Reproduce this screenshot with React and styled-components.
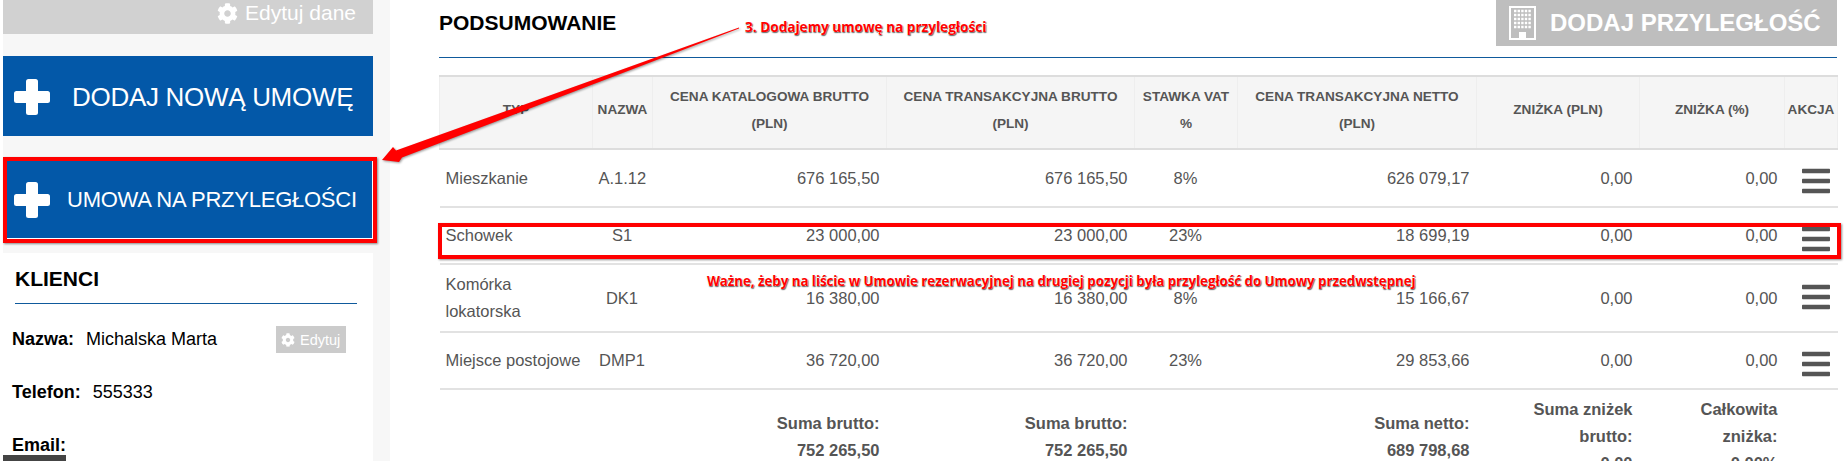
import React from 'react'
import styled, { createGlobalStyle } from 'styled-components'
import { FaBars, FaCog } from 'react-icons/fa'

const COLUMNS = [153, 60, 234, 248, 103, 239, 163, 145, 53]

const HEADERS = [
  ['TYP'],
  ['NAZWA'],
  ['CENA KATALOGOWA BRUTTO', '(PLN)'],
  ['CENA TRANSAKCYJNA BRUTTO', '(PLN)'],
  ['STAWKA VAT', '%'],
  ['CENA TRANSAKCYJNA NETTO', '(PLN)'],
  ['ZNIŻKA (PLN)'],
  ['ZNIŻKA (%)'],
  ['AKCJA'],
]

const ROWS = [
  { type: ['Mieszkanie'], name: 'A.1.12', list: '676 165,50', gross: '676 165,50', vat: '8%', net: '626 079,17' },
  { type: ['Schowek'], name: 'S1', list: '23 000,00', gross: '23 000,00', vat: '23%', net: '18 699,19' },
  { type: ['Komórka', 'lokatorska'], name: 'DK1', list: '16 380,00', gross: '16 380,00', vat: '8%', net: '15 166,67' },
  { type: ['Miejsce postojowe'], name: 'DMP1', list: '36 720,00', gross: '36 720,00', vat: '23%', net: '29 853,66' },
]

const App = () => {
  return (
    <Page>
      <GlobalStyle />
      <Sidebar>
        <EditBar>
          <FaCog size={21} />
          Edytuj dane
        </EditBar>
        <BigButton>
          <PlusIcon />
          <BigLabel>DODAJ NOWĄ UMOWĘ</BigLabel>
        </BigButton>
        <BigButton $second>
          <PlusIcon />
          <BigLabel $small>UMOWA NA PRZYLEGŁOŚCI</BigLabel>
        </BigButton>
        <ClientCard>
          <CardTitle>KLIENCI</CardTitle>
          <ClientRow>
            <FieldName>Nazwa:</FieldName>
            <span>Michalska Marta</span>
            <SmallEdit>
              <FaCog size={14} />
              Edytuj
            </SmallEdit>
          </ClientRow>
          <ClientRow>
            <FieldName>Telefon:</FieldName>
            <span>555333</span>
          </ClientRow>
          <ClientRow>
            <FieldName>Email:</FieldName>
          </ClientRow>
        </ClientCard>
      </Sidebar>

      <Main>
        <SummaryHeader>
          <SummaryTitle>PODSUMOWANIE</SummaryTitle>
          <AddButton>
            <BuildingIcon />
            DODAJ PRZYLEGŁOŚĆ
          </AddButton>
        </SummaryHeader>

        <Table>
          <colgroup>
            {COLUMNS.map((width, index) => (
              <col key={index} width={width} />
            ))}
          </colgroup>
          <thead>
            <tr>
              {HEADERS.map((lines, index) => (
                <HeadCell key={index}>
                  {lines.map((line) => (
                    <div key={line}>{line}</div>
                  ))}
                </HeadCell>
              ))}
            </tr>
          </thead>
          <tbody>
            {ROWS.map((row) => (
              <Row key={row.name}>
                <Cell>
                  {row.type.map((line) => (
                    <div key={line}>{line}</div>
                  ))}
                </Cell>
                <Cell $align='center'>{row.name}</Cell>
                <Cell $align='right'>{row.list}</Cell>
                <Cell $align='right'>{row.gross}</Cell>
                <Cell $align='center'>{row.vat}</Cell>
                <Cell $align='right'>{row.net}</Cell>
                <Cell $align='right'>0,00</Cell>
                <Cell $align='right'>0,00</Cell>
                <MenuCell>
                  <MenuIcon $tall={row.type.length > 1}>
                    <FaBars />
                  </MenuIcon>
                </MenuCell>
              </Row>
            ))}
            <tr>
              <Cell colSpan={2} />
              <TotalCell>Suma brutto:<br />752 265,50</TotalCell>
              <TotalCell>Suma brutto:<br />752 265,50</TotalCell>
              <Cell />
              <TotalCell>Suma netto:<br />689 798,68</TotalCell>
              <TotalCell>Suma zniżek<br />brutto:<br />0,00</TotalCell>
              <TotalCell>Całkowita<br />zniżka:<br />0,00%</TotalCell>
              <Cell />
            </tr>
          </tbody>
        </Table>
      </Main>

      <ButtonHighlight />
      <RowHighlight />
      <PointerArrow viewBox='0 0 1846 461'>
        <polygon points='382,160 393,147 396,150.5 739,27.5 739,28.5 402,157.5 399,162' fill='#f00' />
      </PointerArrow>
      <StepNote>3. Dodajemy umowę na przyległości</StepNote>
      <WarningNote>Ważne, żeby na liście w Umowie rezerwacyjnej na drugiej pozycji była przyległość do Umowy przedwstępnej</WarningNote>
      <DarkTab />
    </Page>
  )
}

// fa-plus has rounded ends and a thicker arm than the one in the package
const PlusIcon = () => (
  <svg width='36' height='36' viewBox='0 0 36 36' fill='#fff'>
    <rect x='12' y='0' width='12' height='36' rx='2.5' />
    <rect x='0' y='12' width='36' height='12' rx='2.5' />
  </svg>
)

// fa-building-o, the package only has the newer outline
const BuildingIcon = () => (
  <svg width='27' height='34' viewBox='0 0 27 34'>
    <path d='M1 1h25v32H1z' fill='none' stroke='#fff' strokeWidth='2' />
    <path
      d='M5 5h17M5 9h17M5 13h17M5 17h17M5 21h17'
      stroke='#fff'
      strokeWidth='2.4'
      strokeDasharray='2.4 1.2'
    />
    <path d='M10 33v-7h7v7z' fill='#fff' />
  </svg>
)

export default App

const GlobalStyle = createGlobalStyle`
  html,
  body {
    margin: 0;
    padding: 0;
    background: #ffffff;
    overflow: hidden;
  }
`

const Page = styled.div`
  position: relative;
  display: flex;
  width: 1846px;
  height: 461px;
  overflow: hidden;
  padding-left: 3px;
  box-sizing: border-box;
  font-family: 'Liberation Sans', Arial, sans-serif;
  color: #555555;
`

const Sidebar = styled.div`
  display: flex;
  flex-direction: column;
  flex: 0 0 387px;
  padding-right: 17px;
  box-sizing: border-box;
  background: #f7f7f7;
`

const EditBar = styled.div`
  display: flex;
  flex: 0 0 34px;
  align-items: center;
  justify-content: flex-end;
  gap: 7px;
  padding: 0 17px 8px 0;
  box-sizing: border-box;
  background: #d1d1d1;
  color: #ffffff;
  font-size: 21px;
`

const BigButton = styled.div`
  display: flex;
  align-items: center;
  flex: 0 0 ${(props) => (props.$second ? '77px' : '80px')};
  margin-top: ${(props) => (props.$second ? '25px' : '22px')};
  padding-left: 11px;
  padding-top: ${(props) => (props.$second ? '0' : '2px')};
  box-sizing: border-box;
  background: #0358a8;
  color: #ffffff;
`

const BigLabel = styled.span`
  margin-left: ${(props) => (props.$small ? '17px' : '22px')};
  font-size: ${(props) => (props.$small ? '22px' : '26px')};
  letter-spacing: ${(props) => (props.$small ? '-0.25px' : '-0.3px')};
  white-space: nowrap;
`

const ClientCard = styled.div`
  flex: 1 0 auto;
  margin-top: 15px;
  padding: 14px 16px 0 9px;
  background: #ffffff;
  color: #000000;
  font-size: 18px;
`

const CardTitle = styled.h3`
  margin: 0 0 9px 3px;
  height: 36px;
  border-bottom: 1px solid #0f5a9c;
  color: #000000;
  font-size: 21px;
  font-weight: bold;
  line-height: 24px;
`

const ClientRow = styled.div`
  display: flex;
  align-items: center;
  gap: 12px;
  height: 53px;
`

const FieldName = styled.b`
  font-weight: bold;
`

const SmallEdit = styled.div`
  display: flex;
  align-items: center;
  gap: 5px;
  width: 70px;
  height: 27px;
  margin-left: auto;
  margin-right: 11px;
  padding-left: 5px;
  box-sizing: border-box;
  background: #cbcbcb;
  color: #ffffff;
  font-size: 14.5px;
`

const Main = styled.div`
  flex: 1;
  padding: 0 9px 0 49px;
  min-width: 0;
`

const SummaryHeader = styled.div`
  display: flex;
  justify-content: space-between;
  height: 57px;
  margin-bottom: 17px;
  border-bottom: 1px solid #0f5a9c;
`

const SummaryTitle = styled.h2`
  margin: 11px 0 0 0;
  color: #000000;
  font-size: 21px;
  font-weight: bold;
  line-height: 24px;
`

const AddButton = styled.div`
  display: flex;
  align-items: center;
  gap: 14px;
  width: 341px;
  height: 46px;
  padding-left: 13px;
  box-sizing: border-box;
  background: #bebebe;
  color: #ffffff;
  font-size: 24px;
  font-weight: bold;
  white-space: nowrap;
`

const Table = styled.table`
  width: 1398px;
  table-layout: fixed;
  border-collapse: collapse;
`

const HeadCell = styled.th`
  height: 73px;
  padding: 0 2px 6px;
  box-sizing: border-box;
  border-top: 2px solid #dddddd;
  border-bottom: 2px solid #dddddd;
  border-left: 1px solid #eeeeee;
  border-right: 1px solid #eeeeee;
  background: #f5f5f5;
  color: #555555;
  font-size: 13.6px;
  font-weight: bold;
  line-height: 27px;
  text-align: center;
  white-space: nowrap;
`

const Row = styled.tr`
  border-bottom: 2px solid #e2e2e2;
  &:first-child td {
    height: 58px;
  }
`

const Cell = styled.td`
  height: 57px;
  padding: 6px 7px 6px 6px;
  box-sizing: border-box;
  color: #555555;
  font-size: 16.5px;
  line-height: 27px;
  text-align: ${(props) => props.$align || 'left'};
  white-space: nowrap;
`

const MenuCell = styled(Cell)`
  padding: 0 8px 0 0;
`

const TotalCell = styled(Cell)`
  font-weight: bold;
  text-align: right;
`

const MenuIcon = styled.div`
  display: flex;
  justify-content: flex-end;
  margin-top: ${(props) => (props.$tall ? '0' : '6px')};
  margin-bottom: ${(props) => (props.$tall ? '3px' : '0')};
  svg {
    display: block;
    width: 28px;
    height: 32px;
  }
`

const ButtonHighlight = styled.div`
  position: absolute;
  left: 3px;
  top: 157px;
  width: 374px;
  height: 86px;
  box-sizing: border-box;
  border: 4px solid #ff0000;
  box-shadow: 1px 1px 2px rgba(0, 0, 0, 0.45), inset -1px -1px 0 #ffffff;
`

const RowHighlight = styled.div`
  position: absolute;
  left: 438px;
  top: 223px;
  width: 1403px;
  height: 36px;
  box-sizing: border-box;
  border: 4px solid #ff0000;
  box-shadow: 1px 1px 2px rgba(0, 0, 0, 0.45);
`

const PointerArrow = styled.svg`
  position: absolute;
  inset: 0;
  width: 1846px;
  height: 461px;
  pointer-events: none;
  filter: drop-shadow(1px 1px 1px rgba(0, 0, 0, 0.4));
`

const Note = styled.div`
  position: absolute;
  color: #ff0000;
  font-family: 'Open Sans', sans-serif;
  font-weight: bold;
  line-height: 18px;
  white-space: nowrap;
  text-shadow: -1px 0 0 #ffffff, 0 -1px 0 #ffffff, 1px 1px 1px #777777, 0 1px 1px #999999;
`

const StepNote = styled(Note)`
  left: 745px;
  top: 18px;
  font-size: 13.6px;
`

const WarningNote = styled(Note)`
  left: 707px;
  top: 272px;
  font-size: 13.25px;
`

const DarkTab = styled.div`
  position: absolute;
  left: 3px;
  bottom: 0;
  width: 63px;
  height: 6px;
  background: #444444;
`
